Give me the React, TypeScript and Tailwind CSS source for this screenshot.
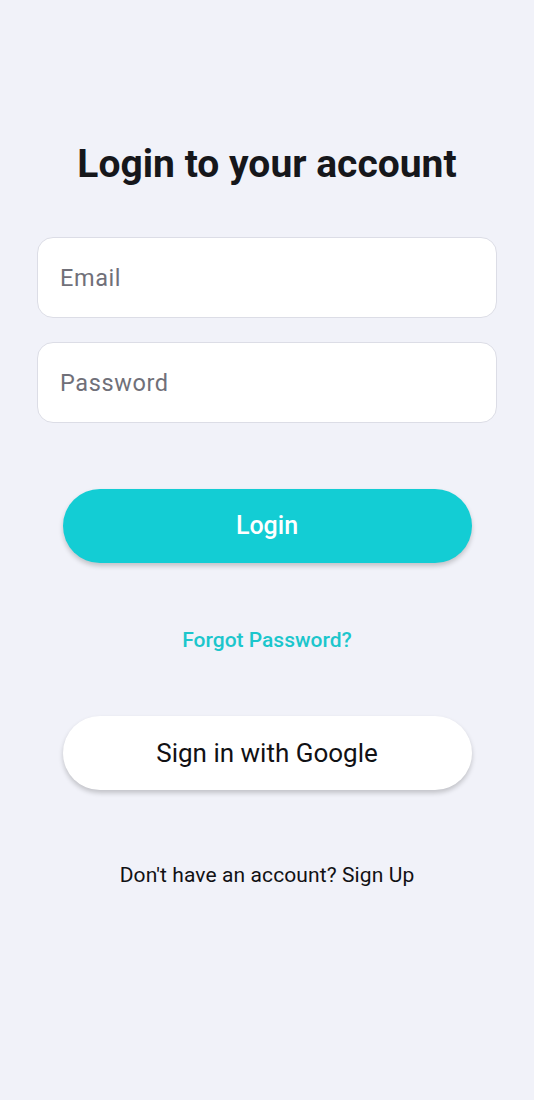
import React, { useState } from 'react'

const App: React.FC = () => {
  const [email, setEmail] = useState('')
  const [password, setPassword] = useState('')

  return (
    <div className="min-h-[1100px] w-full bg-[#f1f2f9] font-['Roboto',sans-serif] flex flex-col items-center pt-[140px]">
      <h1 className="text-[39px] leading-[48px] font-bold text-[#16171b]">
        Login to your account
      </h1>

      <div className="w-full px-[37px] mt-[49px] flex flex-col gap-[24px]">
        <input
          type="email"
          value={email}
          onChange={(e) => setEmail(e.target.value)}
          placeholder="Email"
          className="h-[81px] w-full rounded-[16px] border border-[#dcdde6] bg-white px-[22px] text-[23.5px] text-[#1b1b1f] placeholder:text-[#707079] tracking-[0.6px] outline-none"
        />
        <input
          type="password"
          value={password}
          onChange={(e) => setPassword(e.target.value)}
          placeholder="Password"
          className="h-[81px] w-full rounded-[16px] border border-[#dcdde6] bg-white px-[22px] text-[23.5px] text-[#1b1b1f] placeholder:text-[#707079] tracking-[0.6px] outline-none"
        />
      </div>

      <button className="mt-[66px] h-[74px] w-[409px] rounded-full bg-[#13cdd4] text-white text-[25px] font-medium shadow-[0_3px_5px_rgba(0,0,0,0.2)]">
        Login
      </button>

      <button className="mt-[63px] text-[21px] font-medium text-[#1cc6cc] leading-[28px]">
        Forgot Password?
      </button>

      <button className="mt-[62px] h-[74px] w-[409px] rounded-full bg-white text-[#111114] text-[26px] shadow-[0_3px_5px_rgba(0,0,0,0.2)]">
        Sign in with Google
      </button>

      <p className="mt-[71px] text-[21px] text-[#111114] leading-[28px] tracking-[0.1px]">
        Don't have an account? Sign Up
      </p>
    </div>
  )
}

export default App
